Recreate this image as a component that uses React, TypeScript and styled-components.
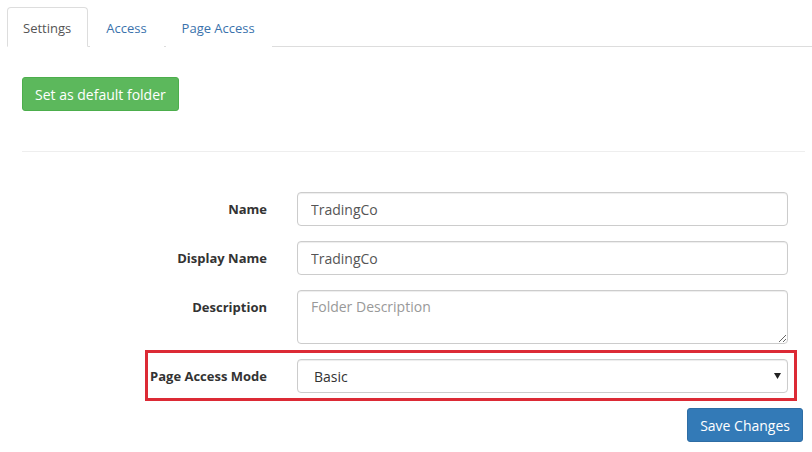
import * as React from 'react';
import styled, { createGlobalStyle } from 'styled-components';

const GlobalStyle = createGlobalStyle`
  html, body {
    margin: 0;
    padding: 0;
    background: #fff;
  }
  body {
    font-family: "Open Sans", "Liberation Sans", Arial, sans-serif;
    font-size: 13px;
    color: #333;
  }
  * { box-sizing: border-box; }
`;

const Page = styled.div`
  width: 812px;
  height: 452px;
  overflow: hidden;
  padding-top: 7px;
`;

const Tabs = styled.ul`
  display: flex;
  list-style: none;
  margin: 0 0 0 7px;
  padding: 0;
  border-bottom: 1px solid #ddd;
  height: 40px;
`;

const Tab = styled.li<{ $active?: boolean }>`
  margin-bottom: -1px;
  a {
    display: block;
    height: 40px;
    padding: 0 16px 0 15px;
    margin-right: 2px;
    line-height: 40px;
    font-size: 13px;
    text-decoration: none;
    border: 1px solid ${p => (p.$active ? '#ddd' : 'transparent')};
    border-bottom-color: ${p => (p.$active ? '#fff' : 'transparent')};
    border-radius: 4px 4px 0 0;
    background: #fff;
    color: ${p => (p.$active ? '#555' : '#3a72ac')};
    cursor: pointer;
  }
`;

const Body = styled.div`
  padding: 30px 7px 0 22px;
`;

const GreenButton = styled.button`
  font-family: inherit;
  font-size: 14px;
  height: 34px;
  padding: 0 12px;
  color: #fff;
  background: #5cb85c;
  border: 1px solid #4cae4c;
  border-radius: 3px;
  cursor: pointer;
`;

const Divider = styled.hr`
  margin: 40px 0 40px 0;
  border: 0;
  border-top: 1px solid #eee;
`;

const Form = styled.form`
  margin-left: 86px;
  width: 695px;
  display: flex;
  flex-direction: column;
  gap: 15px;
`;

const Row = styled.div<{ $highlight?: boolean }>`
  position: relative;
  display: grid;
  grid-template-columns: 174px 1fr;
  align-items: start;
  ${p =>
    p.$highlight &&
    `
    &::after {
      content: '';
      position: absolute;
      left: 37px;
      right: 6px;
      top: -9px;
      bottom: -8px;
      border: 3px solid #dc2a35;
      pointer-events: none;
    }
  `}
`;

const Label = styled.label`
  text-align: right;
  font-weight: bold;
  padding: 0 15px 0 0;
  line-height: 34px;
  height: 34px;
  color: #333;
`;

const Field = styled.div`
  position: relative;
  padding: 0 15px;
`;

const controlStyles = `
  display: block;
  width: 100%;
  font-family: inherit;
  font-size: 14px;
  color: #555;
  background: #fff;
  border: 1px solid #ccc;
  border-radius: 4px;
  box-shadow: inset 0 1px 1px rgba(0,0,0,.075);
  outline: none;
`;

const TextInput = styled.input`
  ${controlStyles}
  height: 34px;
  padding: 0 13px;
`;

const TextArea = styled.textarea`
  ${controlStyles}
  height: 54px;
  padding: 6px 13px;
  line-height: 20px;
  resize: vertical;
  &::placeholder { color: #999; }
`;

const Select = styled.select`
  ${controlStyles}
  height: 34px;
  padding: 0 16px;
  appearance: none;
  -webkit-appearance: none;
  color: #333;
`;

const Caret = styled.svg`
  position: absolute;
  right: 22px;
  top: 14px;
  pointer-events: none;
`;

const Actions = styled.div`
  display: flex;
  justify-content: flex-end;
`;

const BlueButton = styled.button`
  font-family: inherit;
  font-size: 14px;
  height: 34px;
  padding: 0 12px;
  color: #fff;
  background: #337ab7;
  border: 1px solid #2e6da4;
  border-radius: 3px;
  cursor: pointer;
`;

export default function App() {
  const [tab, setTab] = React.useState('Settings');
  return (
    <Page>
      <GlobalStyle />
      <Tabs>
        {['Settings', 'Access', 'Page Access'].map(t => (
          <Tab key={t} $active={t === tab}>
            <a onClick={() => setTab(t)}>{t}</a>
          </Tab>
        ))}
      </Tabs>
      <Body>
        <GreenButton type="button">Set as default folder</GreenButton>
        <Divider />
        <Form onSubmit={e => e.preventDefault()}>
          <Row>
            <Label>Name</Label>
            <Field>
              <TextInput defaultValue="TradingCo" />
            </Field>
          </Row>
          <Row>
            <Label>Display Name</Label>
            <Field>
              <TextInput defaultValue="TradingCo" />
            </Field>
          </Row>
          <Row>
            <Label>Description</Label>
            <Field>
              <TextArea placeholder="Folder Description" />
            </Field>
          </Row>
          <Row $highlight>
            <Label>Page Access Mode</Label>
            <Field>
              <Select defaultValue="Basic">
                <option>Basic</option>
                <option>Advanced</option>
              </Select>
              <Caret width="7" height="6" viewBox="0 0 7 6">
                <path d="M0 0 H7 L3.5 6 Z" fill="#222" />
              </Caret>
            </Field>
          </Row>
          <Actions>
            <BlueButton type="submit">Save Changes</BlueButton>
          </Actions>
        </Form>
      </Body>
    </Page>
  );
}
